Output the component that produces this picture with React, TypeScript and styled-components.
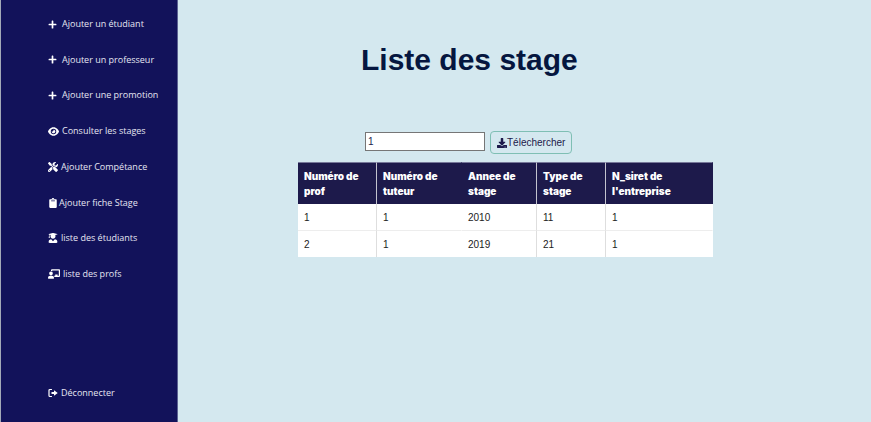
import React, { useState } from "react";
import styled, { createGlobalStyle } from "styled-components";
import {
  FaChalkboardTeacher,
  FaClipboard,
  FaDownload,
  FaPlus,
  FaUserGraduate,
} from "react-icons/fa";
import { FaEye, FaScrewdriverWrench } from "react-icons/fa6";

const GlobalStyle = createGlobalStyle`
  *, *::before, *::after { box-sizing: border-box; }
  body {
    margin: 0;
    background: #d4e8ef;
    font-family: "Liberation Sans", Arial, sans-serif;
  }
`;

const Page = styled.div`
  display: flex;
  min-height: 100vh;
`;

const Sidebar = styled.aside`
  display: flex;
  flex-direction: column;
  justify-content: space-between;
  flex: 0 0 178px;
  padding: 16px 0 21px 47px;
  background: #12125a;
  border-left: 1px solid #a3a9b8;
  border-right: 1px solid #5c6291;
`;

const MenuList = styled.ul`
  display: flex;
  flex-direction: column;
  justify-content: space-between;
  height: 266px;
  margin: 0;
  padding: 0;
  list-style: none;
`;

const MenuLink = styled.a<{ $gap: number }>`
  display: flex;
  align-items: center;
  gap: ${(p) => p.$gap}px;
  height: 16px;
  color: #e6e6f2;
  font: 9px/16px "Open Sans", "Noto Sans", sans-serif;
  text-decoration: none;
  white-space: nowrap;

  svg {
    flex: none;
    color: #fff;
  }
`;

const Main = styled.main`
  flex: 1;
  min-width: 0;
  padding: 40px 158px 40px 120px;
`;

const Title = styled.h1`
  margin: 0 0 51px 63px;
  color: #05163f;
  font-size: 30px;
  line-height: 40px;
  white-space: nowrap;
`;

const SearchForm = styled.form`
  display: flex;
  align-items: flex-start;
  gap: 5px;
  margin: 0 0 8px 67px;
`;

const SearchInput = styled.input`
  width: 120px;
  height: 19px;
  margin-top: 1px;
  padding: 0 2px;
  background: #fff;
  border: 1px solid #767676;
  border-radius: 0;
  color: #22224f;
  font: 10px "Liberation Sans", Arial, sans-serif;
`;

const DownloadButton = styled.button`
  display: flex;
  align-items: center;
  height: 23px;
  padding: 0 6px;
  background: transparent;
  border: 1px solid #7fbfb4;
  border-radius: 4px;
  color: #1d1a4b;
  font: 10px "Liberation Sans", Arial, sans-serif;
  white-space: nowrap;
`;

const Table = styled.table`
  width: 100%;
  table-layout: fixed;
  border-collapse: separate;
  border-spacing: 0;
  background: #fff;
`;

const Column = styled.col<{ $width: string }>`
  width: ${(p) => p.$width};
`;

const HeadCell = styled.th<{ $divided: boolean }>`
  height: 42px;
  padding: 6px 6px 5px;
  background: #1d1a4b;
  border-top: 1px solid #77789a;
  border-right: 1px solid ${(p) => (p.$divided ? "#c3c3cf" : "#1d1a4b")};
  color: #fff;
  font: 900 10px/15px Inter, "Liberation Sans", sans-serif;
  text-align: left;
`;

const Cell = styled.td<{ $divided: boolean }>`
  padding: 6px 6px 5px;
  border-right: 1px solid ${(p) => (p.$divided ? "#dedede" : "#fff")};
  color: #222;
  font-size: 10px;
  line-height: 15px;

  tr + tr > & {
    border-top: 1px solid #ededed;
  }
`;

function LogoutIcon() {
  return (
    <svg width="10" height="10" viewBox="0 0 20 20" fill="none" aria-hidden>
      <path
        d="M7 3H4Q2 3 2 5V15Q2 17 4 17H7"
        stroke="currentColor"
        strokeWidth="2.4"
        strokeLinecap="round"
      />
      <path d="M7 8H12V4.5L19.5 10L12 15.5V12H7Z" fill="currentColor" />
    </svg>
  );
}

const menu = [
  { label: "Ajouter un étudiant", Icon: FaPlus, size: 9, gap: 5 },
  { label: "Ajouter un professeur", Icon: FaPlus, size: 9, gap: 5 },
  { label: "Ajouter une promotion", Icon: FaPlus, size: 9, gap: 5 },
  { label: "Consulter les stages", Icon: FaEye, size: 11, gap: 3 },
  { label: "Ajouter Compétance", Icon: FaScrewdriverWrench, size: 10, gap: 3 },
  { label: "Ajouter fiche Stage", Icon: FaClipboard, size: 10, gap: 1 },
  { label: "liste des étudiants", Icon: FaUserGraduate, size: 10, gap: 3 },
  { label: "liste des profs", Icon: FaChalkboardTeacher, size: 12, gap: 3 },
];

const columns = [
  { label: "Numéro de prof", width: "79px", divided: true },
  { label: "Numéro de tuteur", width: "85px", divided: false },
  { label: "Annee de stage", width: "75px", divided: true },
  { label: "Type de stage", width: "69px", divided: true },
  { label: "N_siret de l'entreprise", width: "auto", divided: false },
];

const rows = [
  ["1", "1", "2010", "11", "1"],
  ["2", "1", "2019", "21", "1"],
];

export default function App() {
  const [query, setQuery] = useState("1");

  return (
    <>
      <GlobalStyle />
      <Page>
        <Sidebar>
          <nav>
            <MenuList>
              {menu.map(({ label, Icon, size, gap }) => (
                <li key={label}>
                  <MenuLink href="#" $gap={gap}>
                    <Icon size={size} aria-hidden />
                    {label}
                  </MenuLink>
                </li>
              ))}
            </MenuList>
          </nav>
          <MenuLink href="#" $gap={3}>
            <LogoutIcon />
            Déconnecter
          </MenuLink>
        </Sidebar>
        <Main>
          <Title>Liste des stage</Title>
          <SearchForm onSubmit={(e) => e.preventDefault()}>
            <SearchInput
              type="text"
              aria-label="Numéro"
              value={query}
              onChange={(e) => setQuery(e.target.value)}
            />
            <DownloadButton type="submit">
              <FaDownload size={10} aria-hidden />
              Télechercher
            </DownloadButton>
          </SearchForm>
          <Table>
            <colgroup>
              {columns.map((c) => (
                <Column key={c.label} $width={c.width} />
              ))}
            </colgroup>
            <thead>
              <tr>
                {columns.map((c) => (
                  <HeadCell key={c.label} scope="col" $divided={c.divided}>
                    {c.label}
                  </HeadCell>
                ))}
              </tr>
            </thead>
            <tbody>
              {rows.map((row) => (
                <tr key={row[0]}>
                  {row.map((value, i) => (
                    <Cell key={columns[i].label} $divided={columns[i].divided}>
                      {value}
                    </Cell>
                  ))}
                </tr>
              ))}
            </tbody>
          </Table>
        </Main>
      </Page>
    </>
  );
}
